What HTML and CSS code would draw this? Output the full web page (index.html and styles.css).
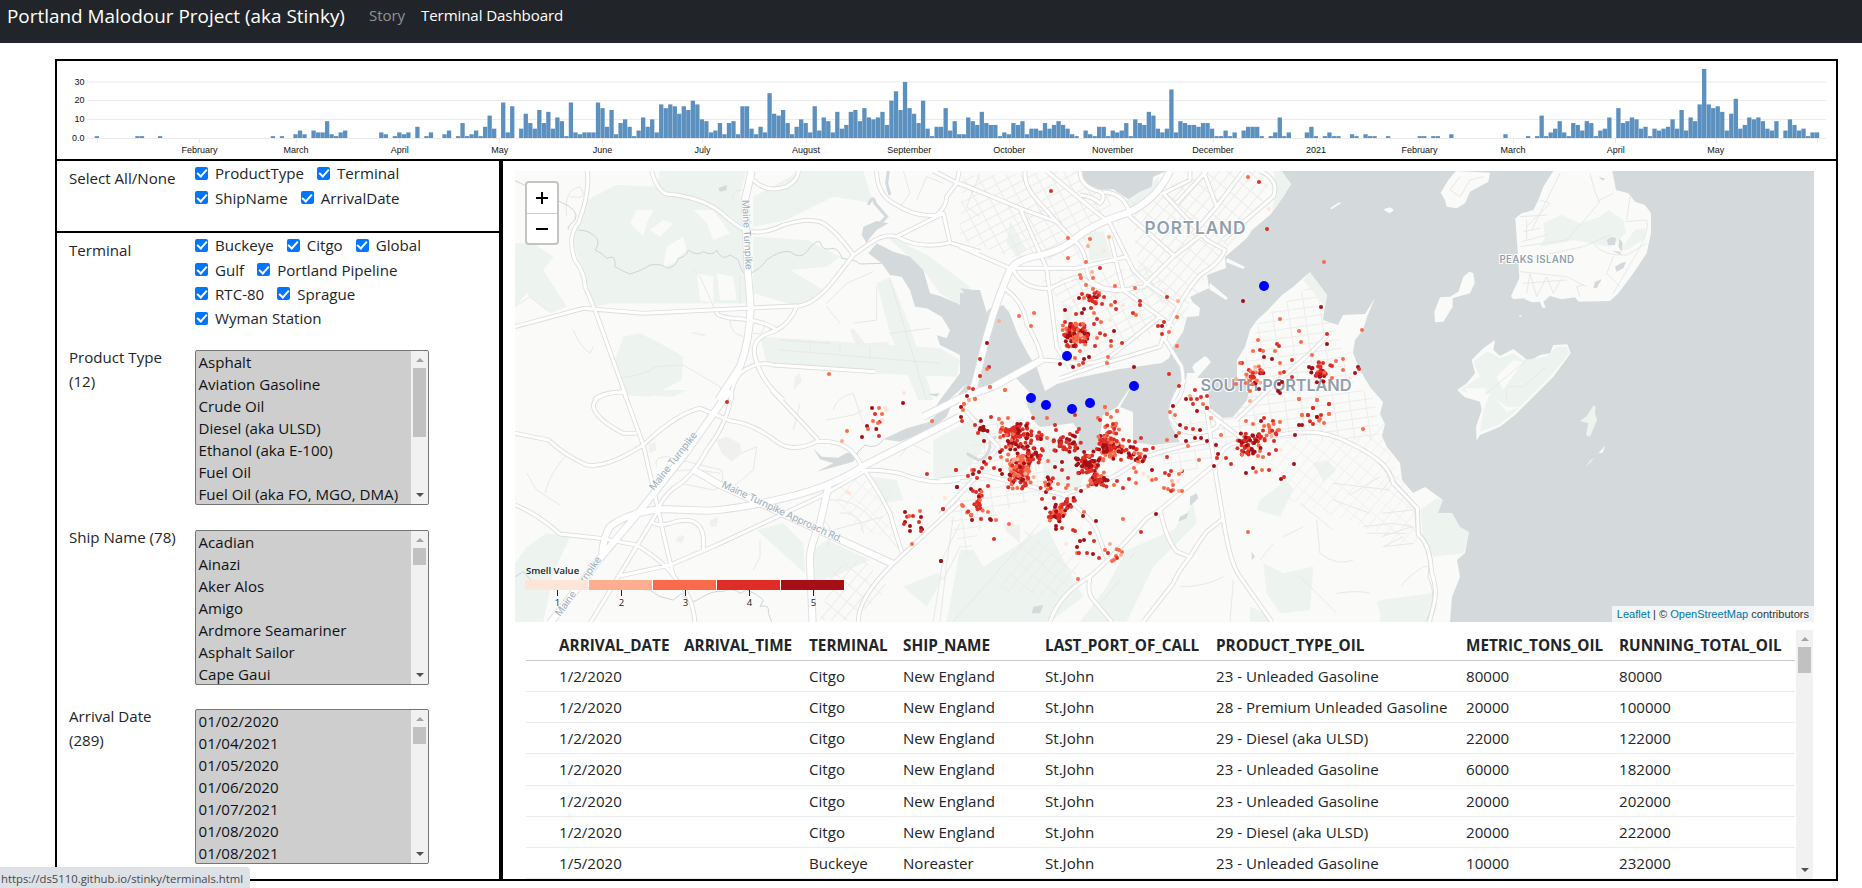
FILE: index.html
```html
<!DOCTYPE html>
<html lang="en">
<head>
<meta charset="utf-8">
<title>Portland Malodour Project</title>
<link rel="stylesheet" href="styles.css">
</head>
<body>
<header class="navbar">
  <span class="brand">Portland Malodour Project (aka Stinky)</span>
  <nav class="nav"><a class="nav-link">Story</a><a class="nav-link active">Terminal Dashboard</a></nav>
</header>
<main class="dashboard">
  <section class="timeline">
    <svg id="histogram" class="histogram" viewBox="57 61 1779 98"></svg>
  </section>
  <div class="columns">
    <aside class="filters">
      <section class="filter-row select-all">
        <div class="filter-label inset">Select All/None</div>
        <div class="checks">
          <label class="check"><i class="box"></i>ProductType</label><label class="check"><i class="box"></i>Terminal</label>
          <label class="check"><i class="box"></i>ShipName</label><label class="check"><i class="box"></i>ArrivalDate</label>
        </div>
      </section>
      <section class="filter-row terminal">
        <div class="filter-label inset">Terminal</div>
        <div class="checks">
          <label class="check"><i class="box"></i>Buckeye</label><label class="check"><i class="box"></i>Citgo</label><label class="check"><i class="box"></i>Global</label>
          <label class="check"><i class="box"></i>Gulf</label><label class="check"><i class="box"></i>Portland Pipeline</label>
          <label class="check"><i class="box"></i>RTC-80</label><label class="check"><i class="box"></i>Sprague</label>
          <label class="check"><i class="box"></i>Wyman Station</label>
        </div>
      </section>
      <section class="filter-row product">
        <div class="filter-label">Product Type (12)</div>
        <div class="listbox">
          <ul class="options"><li>Asphalt</li><li>Aviation Gasoline</li><li>Crude Oil</li><li>Diesel (aka ULSD)</li><li>Ethanol (aka E-100)</li><li>Fuel Oil</li><li>Fuel Oil (aka FO, MGO, DMA)</li></ul>
          <div class="scrollbar"><b class="up"></b><b class="thumb long"></b><b class="down"></b></div>
        </div>
      </section>
      <section class="filter-row ship">
        <div class="filter-label">Ship Name (78)</div>
        <div class="listbox">
          <ul class="options"><li>Acadian</li><li>Ainazi</li><li>Aker Alos</li><li>Amigo</li><li>Ardmore Seamariner</li><li>Asphalt Sailor</li><li>Cape Gaui</li></ul>
          <div class="scrollbar"><b class="up"></b><b class="thumb"></b><b class="down"></b></div>
        </div>
      </section>
      <section class="filter-row arrival">
        <div class="filter-label">Arrival Date (289)</div>
        <div class="listbox">
          <ul class="options"><li>01/02/2020</li><li>01/04/2021</li><li>01/05/2020</li><li>01/06/2020</li><li>01/07/2021</li><li>01/08/2020</li><li>01/08/2021</li></ul>
          <div class="scrollbar"><b class="up"></b><b class="thumb"></b><b class="down"></b></div>
        </div>
      </section>
    </aside>
    <section class="content">
      <div class="map">
        <svg class="map-canvas" viewBox="515 171 1299 451">
          <defs>
            <pattern id="gridA" width="13" height="9" patternUnits="userSpaceOnUse" patternTransform="rotate(-28)"><path class="street" d="M0 .5H13M.5 0V9"/></pattern>
            <pattern id="gridB" width="9" height="14" patternUnits="userSpaceOnUse" patternTransform="rotate(40)"><path class="street" d="M0 .5H9M.5 0V14"/></pattern>
            <pattern id="gridC" width="16" height="9" patternUnits="userSpaceOnUse" patternTransform="rotate(-8)"><path class="street" d="M0 .5H16M.5 0V9"/></pattern>
            <g id="motorways">
              <path transform="translate(500 160) scale(.33333)" d="M755,33L735,120L743,330L752,440Q750,540 720,620L655,720"/>
              <path transform="translate(500 390) scale(.33333)" d="M690,0L560,185L410,375L300,505L150,700M1380,80L1090,228Q1000,290 850,325Q700,360 620,362L480,357Q380,370 330,410Q310,440 307,490M985,290L960,400Q925,480 930,520L938,700"/>
              <path transform="translate(960 160) scale(.33333)" d="M630,33Q590,120 500,160Q400,190 340,240Q300,275 220,290Q170,300 150,330Q110,420 80,530L45,670Q30,710 0,740M245,600L100,680L0,715L-110,770"/>
              <path transform="translate(500 390) scale(.33333)" d="M580,240Q620,260 650,280L1180,522"/>
            </g>
            <g id="majors">
              <path transform="translate(500 160) scale(.33333)" d="M455,33Q470,90 500,102Q600,110 660,155Q710,200 740,212Q790,225 850,195Q930,170 970,190Q1010,215 1060,285M262,33Q270,100 235,190Q200,230 225,300Q255,340 255,380L285,450L375,700L380,720M45,500L250,445L430,460L900,437Q950,430 1010,350L1060,285L1110,250Q1150,220 1190,230Q1260,270 1350,248L1440,275M650,455Q650,470 700,475Q790,480 830,510Q870,490 890,440M830,512Q750,530 765,590Q780,660 850,720M1130,33Q1130,100 1180,130Q1250,175 1310,165Q1340,140 1340,110L1370,70L1378,33M1300,33L1370,68L1440,95M1190,230L1330,160L1350,248M1125,635L820,615Q770,600 720,640Q690,680 695,720M760,60Q800,100 860,80Q895,60 895,33M370,695Q290,700 285,720"/>
              <path transform="translate(500 390) scale(.33333)" d="M45,130L145,150Q200,200 260,225Q320,235 430,165Q530,70 600,55Q650,75 690,92Q760,100 830,155Q880,190 950,155Q1050,145 1085,230Q1130,290 1170,370Q1190,440 1205,485M370,0L430,165L475,360M370,5Q280,10 280,50Q290,90 370,130L410,130M695,0Q690,90 620,180Q580,260 520,295Q480,330 470,370L355,560L270,700M815,0L955,150M1100,240L960,320L650,465L510,525L350,560M1085,240Q1150,240 1200,250Q1300,290 1380,268M1380,335L1175,525Q1070,630 1075,700M45,345Q110,370 180,432L300,445L410,465Q500,520 530,570Q580,620 585,700M475,360L490,430L520,560M455,395Q470,410 510,400Q600,370 610,440L610,480"/>
              <path transform="translate(960 160) scale(.33333)" d="M0,70L180,145L290,185L340,240Q375,265 380,320Q380,390 490,390L550,380Q600,330 640,290L730,220M260,33L400,150L450,190L520,330L560,370L660,440M195,33Q190,80 240,130L290,185M360,33Q360,80 420,95Q440,110 420,130Q400,110 360,105M430,95Q500,100 510,170L640,285M0,260L150,325L350,325L500,290M610,100L740,240L795,270Q780,310 720,345Q680,390 650,450Q620,500 615,540L665,620Q680,700 640,735M450,230L490,390L600,470L640,500M180,145L260,325L290,560L330,625M125,380Q190,420 200,490Q240,560 245,600L320,605Q400,620 450,590L600,470M300,655L400,620L600,560L620,500M160,330Q190,390 270,385Q340,350 360,350Q420,400 490,390M730,33L770,140L700,220M610,100L690,60L690,33M850,33L770,140M900,33Q960,60 940,110L870,170L790,240M650,130L740,33"/>
              <path transform="translate(960 160) scale(.33333)" d="M1105,520Q1080,560 950,665L830,780"/>
              <path transform="translate(940 380) scale(.33333)" d="M0,300L130,285Q320,330 370,345L520,290L620,230Q720,195 830,180M370,345Q450,410 470,450L500,535M0,405L100,300L175,200L75,90M330,725Q360,640 450,590Q520,530 620,415L660,390L840,240Q840,195 900,185L1050,160Q1150,145 1230,190Q1340,240 1355,300Q1400,350 1430,385L1435,460Q1480,510 1470,590Q1500,650 1465,725M800,90L830,300L850,420Q870,550 900,590L995,725M660,390Q680,480 710,515L750,530Q780,480 800,455L850,415M750,530Q710,580 700,610L610,725M450,590Q440,640 460,660L515,725M735,0Q690,60 690,110Q710,160 770,160Q850,150 830,120L800,95L905,175"/>
            </g>
          </defs>
          <rect class="land" x="515" y="171" width="1299" height="451"/>
          <g class="green">
            <path transform="translate(500 160) scale(.33333)" d="M480,33L740,33L720,100L735,200L745,430L330,430L290,440L250,380L235,300L215,230L235,180L260,120L350,75L470,80ZM45,250L100,250L160,290L130,330L200,440L150,460L80,400L45,440ZM760,110L800,90L900,33L1090,33L1120,130L1000,110L860,180L760,200ZM345,600L370,530L420,520L500,560L550,590L545,660L450,710L375,705ZM780,530L1320,565L1380,600L1370,650L1100,640L800,610ZM1130,370L1170,350L1230,500L1300,720L1255,720L1170,520ZM760,230L920,240L1020,290L980,320L870,330L970,390L900,440L760,400ZM1150,220L1290,290L1410,380L1400,450L1320,400L1270,330Z"/>
            <path transform="translate(500 390) scale(.33333)" d="M1300,150L1380,110L1380,250L1300,280ZM770,420L850,400L910,460L915,550ZM940,480L980,450L1110,510L1000,560L940,575ZM45,520L80,470L140,430L210,440L160,550L130,695L45,695ZM1310,550L1210,590L1280,650L1330,560ZM1370,550L1340,695L1380,695ZM1110,260L1190,270L1210,330L1150,340ZM385,0L560,0L520,20L400,15Z"/>
            <path transform="translate(940 380) scale(.33333)" d="M0,170L110,110L150,180L80,270L0,290ZM60,510L100,510L130,560L320,440L360,520L430,650L330,725L20,725ZM560,510L700,450L760,370L770,430L640,560L560,725L420,725L500,620ZM960,360L1040,300L1060,330L1020,410L950,390ZM970,550L1030,580L1120,560L1110,690L1020,700L980,640ZM1310,665L1475,640L1480,725L1320,700ZM310,170L400,170L440,230L420,330L310,300ZM1120,250L1160,240L1190,270L1150,305ZM930,680L980,700L995,725L930,725Z"/>
            <path transform="translate(1380 160) scale(.33333)" d="M120,1050L170,1015L190,1020L175,1060L215,1060L240,1100L268,1115L250,1180L160,1190L130,1130ZM0,1320L155,1300L150,1386L0,1386Z"/>
            <path transform="translate(960 160) scale(.33333)" d="M940,33L970,33L990,70L975,110L935,150L950,90ZM1030,360L1050,335L1100,405L1095,440ZM380,215L430,215L455,290L390,300ZM150,180L200,270L170,290L140,250ZM310,430L340,440L330,490L310,490ZM500,120L545,90L600,50L580,110L510,150Z"/>
          </g>
          <g class="clearing">
            <path transform="translate(500 160) scale(.33333)" d="M390,190L410,150L460,150L440,190L430,230ZM490,320L500,260L550,230L560,270L520,310ZM580,150L640,150L690,220L640,240L620,190ZM590,340L640,350L640,430L600,420ZM450,210L490,180L520,190L480,230ZM650,340L700,350L710,420L660,420Z"/>
          </g>
          <g>
            <path fill="url(#gridA)" d="M962 176L1080 171L1120 190L1080 260L1020 260L960 240Z M1040 280L1160 265L1165 330L1075 365L1060 300Z"/>
            <path fill="url(#gridB)" d="M1130 200L1210 171L1270 171L1265 205L1215 260L1180 330L1140 280Z M1000 590L1025 530L1080 560L1070 600Z M832 570L860 555L890 590L850 620L820 620Z"/>
            <path fill="url(#gridC)" d="M1240 375L1260 320L1310 285L1335 325L1350 380L1375 400L1380 440L1240 440L1180 480L1150 450Z M980 420L1030 420L1080 470L1030 500L985 520L965 560L950 520Z"/>
            <path fill="url(#gridB)" opacity=".6" d="M1240 440L1380 440L1420 510L1400 540L1290 500Z M840 470L890 490L900 540L860 530L835 500Z M1385 420L1395 480L1420 540L1400 550L1340 500L1335 450Z"/>
          </g>
          <g class="minor">
            <path transform="translate(500 160) scale(.33333)" d="M200,170Q190,90 240,80Q270,120 210,110M45,440L90,410L140,450M220,510Q240,560 270,580L280,560M350,655Q420,650 470,620L550,615L660,680L680,720M650,460L600,350L580,330M720,350L720,430M1130,380L1130,480L1060,490M980,440L1020,490M1120,335L1040,370L980,430M1440,40L1400,140L1440,170M1210,33L1230,100L1200,140M1250,120L1280,50L1330,70M840,540L990,550M840,570L1320,610M1170,360L1280,720M1170,520L1290,505M930,540V570M1020,550V580M1110,560V590M700,120Q690,90 730,90M690,480Q690,520 730,530M790,480Q800,530 760,520"/>
            <path transform="translate(500 390) scale(.33333)" d="M80,250L110,300L180,345M195,200Q150,250 135,310M470,230Q460,200 500,200L665,240Q680,290 640,300L540,280M480,250Q560,230 660,250M700,200L770,170L760,240L700,290M900,40L880,120M1000,60Q1010,20 1060,10L1090,100M980,90L1060,75L1090,60M990,330Q1060,320 1130,400L1190,470M1020,370Q1080,360 1090,430M1000,420L1150,380M780,450L780,500L760,540M970,390Q1010,420 980,470M1380,400L1330,500L1300,695M1360,380L1340,520L1320,695M1200,200L1230,160L1290,190"/>
            <path transform="translate(940 380) scale(.33333)" d="M720,620Q800,620 850,590M1000,490L960,540M1130,420L1140,520Q1190,560 1240,540M1080,590L1190,700M1190,640Q1260,630 1290,640M880,600L870,725M1270,440L1360,430L1420,440M1330,500L1420,490M1280,460L1400,460M1030,470L1090,440M1080,370L1180,450M1180,360L1290,400M1230,345L1320,290M1180,310L1350,330M540,600L480,670M40,725L300,430M10,600L60,500"/>
          </g>
          <g class="buildings">
            <path transform="translate(500 390) scale(.33333)" d="M650,150L680,140L720,160L725,190L695,215L665,190ZM445,165L465,155L470,180L450,190ZM630,390L655,380L650,410L630,410ZM540,435L555,440L545,460L525,450Z"/>
            <path transform="translate(500 160) scale(.33333)" d="M1050,510L1060,505L1095,550L1165,545L1165,560L1070,560ZM885,650L900,640L905,665L880,690ZM575,515L615,522L615,530L575,520Z"/>
            <path transform="translate(940 380) scale(.33333)" d="M190,430L240,435L240,490L200,455Z"/>
          </g>
          <g class="water">
            <path d="M1282 171L1291 184L1284 196L1270 215L1252 230L1247 238L1225 257L1226 268L1207 275L1209 288L1190 297L1198 312L1187 317L1183 332L1173 347L1169 358L1162 363L1120 369L1077 378L1057 384L1045 391L1037 368L1028 354L1018 335L1009 312L1003 305L988 310L984 321L977 323L973 305L960 295L960 362L975 376L970 385L990 390L1015 377L1030 393L1027 405L1035 422L1040 427L1060 425L1073 423L1080 433L1077 445L1082 453L1097 448L1100 437L1103 415L1117 407L1127 392L1133 384L1120 407L1133 412L1133 442L1153 445L1180 442L1170 423L1168 410L1185 387L1187 373L1195 373L1192 367L1207 357L1211 362L1197 378L1210 378L1208 390L1210 408L1223 418L1233 417L1247 400L1250 387L1237 380L1237 360L1245 347L1250 330L1257 320L1268 310L1282 295L1293 287L1310 272L1327 295L1323 320L1338 325L1343 315L1365 314L1375 298L1367 317L1363 330L1355 340L1353 353L1360 370L1370 387L1383 402L1380 414L1385 424L1382 436L1387 447L1400 463L1402 480L1413 493L1425 487L1443 500L1438 513L1452 513L1460 527L1469 532L1465 553L1457 560L1460 577L1452 597L1450 622H1814V171Z"/>
            <path transform="translate(960 160) scale(.33333)" d="M357,33L370,65L420,90L460,88L505,118L540,95L575,80L580,50L620,33Z"/>
            <path transform="translate(500 160) scale(.33333)" d="M1100,250L1085,225L1090,200L1130,183L1165,190L1130,210L1105,240ZM1105,280L1145,310L1170,345L1205,350L1230,390L1245,440L1280,445L1325,470L1350,510L1340,535L1310,525L1320,555L1370,580L1420,610L1415,655L1365,715L1385,715L1435,655L1500,590L1440,390L1425,390L1380,385L1415,420L1410,450L1370,430L1320,408L1290,400L1270,330L1230,290L1180,275L1130,250ZM655,85L680,75V90L660,95Z"/>
            <path transform="translate(960 160) scale(.33333)" d="M0,400L25,395L50,440L50,475L75,480L90,445L135,440L110,500L60,640L10,680L-90,770L-60,720L0,640Z"/>
            <path transform="translate(500 390) scale(.33333)" d="M1365,20L1330,50L1290,95L1220,115L1150,148L1200,155L1290,120L1340,80ZM1075,190L1040,188L1015,203L965,200L940,175L960,208L1000,220L950,245L1060,215ZM1285,12L1320,10L1310,20Z"/>
            <path transform="translate(940 380) scale(.33333)" d="M750,350L770,340L775,355L750,378ZM720,410L745,398L740,415L715,425ZM280,680L310,675L300,700L275,700ZM565,540L585,515L575,530ZM935,515L945,530L935,540Z"/>
          </g>
          <g class="stream">
            <path transform="translate(500 160) scale(.33333)" d="M45,62L180,125Q240,150 225,180Q200,200 205,210M235,210Q270,210 290,235Q300,250 285,270Q310,280 320,295Q350,280 345,320Q370,335 390,342Q430,330 450,315Q490,310 500,325Q530,320 535,295Q560,290 565,270Q590,290 610,275Q640,290 650,270Q665,305 690,285Q700,290 715,300Q725,340 740,345Q780,330 800,300Q840,270 870,275Q900,300 920,275Q945,240 960,245Q965,275 1000,265Q1020,270 1025,295Q1070,300 1080,312L1145,310"/>
            <path transform="translate(500 390) scale(.33333)" d="M45,560L70,545L110,590L170,580L240,600L280,590L450,600L480,620L520,630L545,610Q570,650 600,625Q640,600 665,605Q700,590 720,610L740,600Q770,610 790,630L780,650Q810,640 805,670L815,695M1150,148Q1130,180 1095,165L1070,190"/>
          </g>
          <g class="wide-stream">
            <path transform="translate(500 160) scale(.33333)" d="M1165,33L1160,70L1170,105M1105,135Q1120,100 1125,130L1160,170L1140,190"/>
            <path transform="translate(940 380) scale(.33333)" d="M170,170Q145,180 150,200Q140,240 115,240L80,220"/>
          </g>
          <g class="land">
            <path transform="translate(1380 160) scale(.33333)" d="M520,33L697,33L708,90L745,100L765,125L795,135L813,160L813,220L800,280L760,340L715,400L690,423L596,425L585,412L545,418L510,408L490,425L497,443L487,443L480,425L455,427L430,415L400,418L393,408L418,355L415,300L406,175L425,160L460,150L475,120L490,80ZM228,33L330,38L325,65L270,95L255,130L230,145L200,140L195,120L182,98L205,60ZM345,540L340,570L360,588L400,567L430,590L445,605L480,585L510,580L520,555L562,553L572,580L520,650L405,765L360,800L300,825L290,842L288,800L305,750L300,725L255,712L232,690L260,670L285,640L275,600L310,565ZM268,335L280,340L284,370L270,400L240,408L218,415L218,440L190,485L165,487L163,455L180,412L210,410L235,395L250,350ZM676,856L668,878L655,880ZM643,893L617,920L630,902ZM10,148L30,142L42,150L30,160L20,155ZM-150,145L-125,128L-115,128L-145,148ZM416,465L425,465L422,471Z"/>
            <path d="M1193 365L1205 356L1210 362L1200 370Z M1227 258L1245 267L1243 269L1226 262Z M1210 283L1228 298L1226 300L1209 289Z M1190 300L1200 308L1199 316L1187 317Z"/>
          </g>
          <g class="green">
            <path transform="translate(1380 160) scale(.33333)" d="M490,190L545,165L600,190L660,170L685,150L730,180L738,220L690,260L580,240L540,250L480,260L495,230ZM720,270L765,210L795,205L795,235L740,270ZM335,580L360,595L400,580L430,600L500,590L530,560L560,560L568,580L515,645L400,760L355,795L300,815L310,750L330,700L290,710L240,690L300,650L280,605L320,575ZM640,737L647,738L645,760L651,780L630,830L618,825L625,790L600,783L620,768Z"/>
          </g>
          <g class="clearing"><path transform="translate(1380 160) scale(.33333)" d="M350,650L400,600L430,605L370,690ZM255,685L320,685L310,710L270,712ZM340,710L380,740L420,740L380,755Z"/></g>
          <g class="water"><path transform="translate(1380 160) scale(.33333)" d="M680,240L695,230L708,235L705,255L685,255ZM718,235L728,250L725,275L715,260ZM705,320L725,308L738,306L730,325L710,335ZM645,365L665,358L650,385L640,383ZM655,52L675,55L670,62ZM695,272L720,275L725,285Z"/></g>
          <g class="minor">
            <path transform="translate(1380 160) scale(.33333)" d="M540,40L455,210M630,40Q650,120 660,125L605,190L560,240L420,260M700,100L650,125M480,120L510,130L440,200M420,170L500,165M440,180V240M430,215L480,205M425,245L500,225M420,300L610,260L690,225M735,185L800,180Q810,210 770,280L700,400M640,250Q670,290 740,285L800,250M700,290L680,340L720,380M420,335L560,350L620,380M430,370L560,360M440,400L450,340L470,410L500,350L520,400L545,355M600,410L590,380L610,375M750,110L740,180M240,50L210,90L240,110L270,60L310,50M320,700L440,600M380,720L380,680L430,680L500,620M30,960L0,1000M5,1060L100,1050M5,1130L80,1105L100,1100M10,1160L70,1130M65,1280Q70,1260 130,1220L145,1220"/>
          </g>
          <g class="roads">
            <use href="#majors" class="casing"/><use href="#motorways" class="casing wide"/>
            <use href="#majors" class="fill"/><use href="#motorways" class="fill wide"/>
            <g class="casing"><path id="coastal" transform="translate(1380 160) scale(.33333)" d="M0,905Q30,930 40,970L112,1045L115,1125Q150,1150 155,1240Q175,1290 160,1340L148,1386"/></g>
            <use href="#coastal" class="fill"/>
          </g>
          <g class="place">
            <text x="1144.5" y="233.5" font-size="17.2" textLength="101">PORTLAND</text>
            <text x="1200.5" y="391" font-size="16.4" textLength="151">SOUTH PORTLAND</text>
            <text x="1499.5" y="263" font-size="9.8" textLength="74.5">PEAKS ISLAND</text>
          </g>
          <g class="road-name">
            <text transform="translate(742 200) rotate(87)" textLength="70">Maine Turnpike</text>
            <text transform="translate(654 491) rotate(-52)" textLength="71">Maine Turnpike</text>
            <text transform="translate(560 617) rotate(-54)" textLength="71">Maine Turnpike</text>
            <text transform="translate(721 487) rotate(25)" textLength="132">Maine Turnpike Approach Rd.</text>
          </g>
          <g id="reports"></g>
          <g id="terminals" class="terminals"></g>
          <g class="legend">
            <text class="legend-title" x="526" y="574">Smell Value</text>
            <rect class="level1" x="525" y="580" width="63" height="10"/><rect class="level2" x="589" y="580" width="63" height="10"/><rect class="level3" x="653" y="580" width="63" height="10"/><rect class="level4" x="717" y="580" width="63" height="10"/><rect class="level5" x="781" y="580" width="63" height="10"/>
            <path class="legend-tick" d="M557.5 590v6M621.5 590v6M685.5 590v6M749.5 590v6M813.5 590v6"/>
            <text x="557.5" y="606">1</text><text x="621.5" y="606">2</text><text x="685.5" y="606">3</text><text x="749.5" y="606">4</text><text x="813.5" y="606">5</text>
          </g>
        </svg>
        <div class="zoom">
          <span class="zoom-btn"><svg viewBox="0 0 12 12"><path d="M0 6H12M6 0V12"/></svg></span>
          <span class="zoom-btn"><svg viewBox="0 0 12 12"><path d="M0 6H12"/></svg></span>
        </div>
        <div class="attribution"><a>Leaflet</a> | © <a>OpenStreetMap</a> contributors</div>
      </div>
      <div class="table-wrap">
        <table class="shipments">
          <colgroup><col class="c-pick"><col class="c-date"><col class="c-time"><col class="c-term"><col class="c-ship"><col class="c-port"><col class="c-prod"><col class="c-tons"><col class="c-total"></colgroup>
          <thead><tr><th></th><th>ARRIVAL_DATE</th><th>ARRIVAL_TIME</th><th>TERMINAL</th><th>SHIP_NAME</th><th>LAST_PORT_OF_CALL</th><th>PRODUCT_TYPE_OIL</th><th>METRIC_TONS_OIL</th><th>RUNNING_TOTAL_OIL</th></tr></thead>
          <tbody>
            <tr><td></td><td>1/2/2020</td><td></td><td>Citgo</td><td>New England</td><td>St.John</td><td>23 - Unleaded Gasoline</td><td>80000</td><td>80000</td></tr>
            <tr><td></td><td>1/2/2020</td><td></td><td>Citgo</td><td>New England</td><td>St.John</td><td>28 - Premium Unleaded Gasoline</td><td>20000</td><td>100000</td></tr>
            <tr><td></td><td>1/2/2020</td><td></td><td>Citgo</td><td>New England</td><td>St.John</td><td>29 - Diesel (aka ULSD)</td><td>22000</td><td>122000</td></tr>
            <tr><td></td><td>1/2/2020</td><td></td><td>Citgo</td><td>New England</td><td>St.John</td><td>23 - Unleaded Gasoline</td><td>60000</td><td>182000</td></tr>
            <tr><td></td><td>1/2/2020</td><td></td><td>Citgo</td><td>New England</td><td>St.John</td><td>23 - Unleaded Gasoline</td><td>20000</td><td>202000</td></tr>
            <tr><td></td><td>1/2/2020</td><td></td><td>Citgo</td><td>New England</td><td>St.John</td><td>29 - Diesel (aka ULSD)</td><td>20000</td><td>222000</td></tr>
            <tr><td></td><td>1/5/2020</td><td></td><td>Buckeye</td><td>Noreaster</td><td>St.John</td><td>23 - Unleaded Gasoline</td><td>10000</td><td>232000</td></tr>
          </tbody>
        </table>
        <div class="scrollbar tall"><b class="up"></b><b class="thumb"></b><b class="down"></b></div>
      </div>
    </section>
  </div>
</main>
<div class="status">https://ds5110.github.io/stinky/terminals.html</div>
<script src="script.js"></script>
</body>
</html>
```
FILE: styles.css
```css
* { box-sizing: border-box; }
body { margin: 0; height: 888px; overflow: hidden; background: #fff; color: #212529; font-family: "Open Sans", "Noto Sans", sans-serif; font-size: 15.1px; line-height: 24px; }

.navbar { display: flex; height: 43px; padding-left: 7px; background: #212529; }
.brand { width: 362px; font-size: 18.9px; line-height: 32px; color: #fff; white-space: nowrap; letter-spacing: .01px; }
.nav { display: flex; gap: 16px; line-height: 31px; letter-spacing: -.1px; }
.nav-link { color: #909294; }
.nav-link.active { color: #fff; }

.dashboard { display: flex; flex-direction: column; width: 1783px; height: 822px; margin: 16px 0 0 55px; border: 2px solid #000; }
.timeline { flex: none; height: 100px; border-bottom: 2px solid #000; }
.histogram { display: block; width: 1779px; height: 98px; }
.grid { stroke: #ebebeb; }
.grid.soft { stroke: #f4f4f4; }
.bars rect { fill: #5b90bf; }
.axis { font: 9px "Liberation Sans", Arial, sans-serif; fill: #111; }
.axis .month { text-anchor: middle; }
.axis .count { text-anchor: end; }

.columns { display: flex; flex: 1; min-height: 0; }
.filters { flex: none; width: 446px; border-right: 4px solid #000; }
.filter-row { display: grid; grid-template-columns: 126px 1fr; align-items: start; padding-left: 12px; }
.filter-label { width: 116px; margin-top: -1px; }
.filter-label.inset { padding-top: 6px; }
.select-all { height: 72px; border-bottom: 2px solid #000; }
.terminal { height: 113px; }
.product { height: 180px; }
.ship { height: 179px; }
.checks { display: flex; flex-wrap: wrap; width: 250px; column-gap: 13px; }
.check { display: flex; align-items: center; height: 24.4px; gap: 7px; white-space: nowrap; }
.box { width: 13px; height: 13px; border-radius: 2px; background: #0075ff; display: flex; align-items: center; justify-content: center; }
.box::after { content: ""; width: 4px; height: 8px; margin-top: -2px; border: solid #fff; border-width: 0 2px 2px 0; transform: rotate(42deg); }

.listbox { display: flex; width: 234px; height: 155px; margin-top: 4px; border: 1px solid #767676; border-radius: 2px; overflow: hidden; background: #cecece; }
.options { flex: 1; margin: 0; padding: 0 0 0 2.5px; list-style: none; color: #101214; line-height: 22px; white-space: nowrap; overflow: hidden; }
.scrollbar { flex: none; display: flex; flex-direction: column; align-items: center; width: 17px; background: #f1f1f1; }
.scrollbar .up, .scrollbar .down { width: 0; height: 0; border: 4px solid transparent; }
.scrollbar .up { margin: 3px 0 6px; border-bottom-color: #a3a3a3; }
.scrollbar .down { margin: auto 0 3px; border-top-color: #505050; }
.scrollbar .thumb { width: 13px; height: 17px; background: #c1c1c1; }
.scrollbar .thumb.long { height: 69px; }

.content { flex: 1; min-width: 0; padding: 10px 22px 0 12px; }
.map { position: relative; width: 1299px; height: 451px; overflow: hidden; }
.map-canvas { display: block; width: 1299px; height: 451px; }
.land { fill: #fafaf8; }
.green { fill: #edf3ee; }
.clearing { fill: #fafaf8; }
.water { fill: #d4dadc; }
.buildings { fill: #f0f0ee; }
.street { fill: none; stroke: #ececeb; stroke-width: 1; }
.minor path { fill: none; stroke: #e8e8e8; stroke-width: 1; vector-effect: non-scaling-stroke; }
.stream path, .wide-stream path { fill: none; stroke: #ccd6da; stroke-width: 1; vector-effect: non-scaling-stroke; }
.wide-stream path { stroke-width: 3; stroke: #d4dadc; }
.roads path, #majors path, #motorways path { vector-effect: non-scaling-stroke; fill: none; stroke-linejoin: round; }
.casing { stroke: #dedede; stroke-width: 4.8px; }
.fill { stroke: #fff; stroke-width: 3px; }
.casing.wide { stroke-width: 8px; }
.fill.wide { stroke-width: 6.2px; }
.place { font-family: Inter, "Open Sans", sans-serif; font-weight: 600; fill: #919fad; stroke: #fff; stroke-width: 2px; paint-order: stroke; }
.road-name { font: 500 10px Inter, "Open Sans", sans-serif; fill: #a7b5c1; stroke: #fff; stroke-width: 1.5px; paint-order: stroke; }
.terminals { fill: #00f; }
.level1 { fill: #fee5d9; }
.level2 { fill: #fcae91; }
.level3 { fill: #fb6a4a; }
.level4 { fill: #de2d26; }
.level5 { fill: #a50f15; }
.legend text { font-size: 9.5px; text-anchor: middle; fill: #212529; }
.legend .legend-title { font-weight: 600; font-size: 9.5px; text-anchor: start; }
.legend-tick { stroke: #222; }
.zoom { position: absolute; left: 10px; top: 10px; width: 34px; border: 2px solid #c4c4c3; border-radius: 4px; background: #fff; }
.zoom-btn { display: flex; align-items: center; justify-content: center; height: 29px; }
.zoom-btn:first-child { height: 31px; border-bottom: 1px solid #ccc; }
.zoom-btn svg { width: 12px; height: 12px; stroke: #000; stroke-width: 2; }
.attribution { position: absolute; right: 0; bottom: 0; height: 16px; padding: 0 5px; background: #f2f4f5; font: 11.05px/16px "Liberation Sans", Arial, sans-serif; color: #333; white-space: nowrap; }
.attribution a { color: #0078a8; }

.table-wrap { display: flex; justify-content: space-between; height: 249px; margin: 8px 1px 0 11px; overflow: hidden; }
.shipments { width: 1269px; table-layout: fixed; border-collapse: separate; border-spacing: 0; white-space: nowrap; }
.shipments th, .shipments td { padding: 0; text-align: left; height: 31px; line-height: 24px; border-bottom: 1px solid #e9ebec; }
.shipments th { height: 31px; padding-bottom: 1px; font-weight: 700; font-size: 15.3px; border-bottom-color: #c9cacc; }
.c-pick { width: 33px; }
.c-date { width: 125px; }
.c-time { width: 125px; }
.c-term { width: 94px; }
.c-ship { width: 142px; }
.c-port { width: 171px; }
.c-prod { width: 250px; }
.c-tons { width: 153px; }
.tall .thumb { height: 26px; }
.status { position: absolute; left: 0; bottom: 0; width: 250px; height: 21px; padding-left: 1px; border-radius: 0 4px 0 0; background: #dee1e6; color: #45484c; font-size: 11.3px; line-height: 23px; white-space: nowrap; }
```
FILE: script.js
```js
const NS = 'http://www.w3.org/2000/svg';
function add(parent, tag, attrs, text) {
  const el = document.createElementNS(NS, tag);
  for (const k in attrs) el.setAttribute(k, attrs[k]);
  if (text) el.textContent = text;
  parent.appendChild(el);
  return el;
}

// Smell reports per time bin; [first bin, counts...]
const runs = [
  [0, 1], [9, 1, 1], [14, 1], [39, 1], [41, 1], [44, 2, 4, 2], [48, 4, 3, 3, 9, 2, 1, 3, 4], [63, 3, 2],
  [66, 1, 3, 2, 3], [71, 6], [73, 1, 3], [77, 2, 4], [80, 1, 8, 1, 2, 4, 1, 6, 12, 5],
  [90, 19, 3, 17, 0, 5, 13, 8, 5, 15, 8, 14, 5, 11, 9, 1, 19, 3, 2, 3, 3, 3, 19, 16, 6, 15, 2, 8, 10, 6, 1, 4, 11, 6, 10, 3,
    18, 16, 18, 17, 13, 17, 15, 20, 18, 10, 9, 3, 4, 8, 2, 8, 9, 2, 17, 17, 5, 2, 6, 3, 24, 13, 12, 15, 8, 2, 6, 10, 8, 3, 17,
    4, 11, 9, 3, 14, 5, 7, 14, 15, 9, 16, 11, 10, 11, 14, 7, 20, 25, 15, 30, 16, 13, 8, 20, 5, 1, 6, 6, 16, 4, 9, 2, 2, 11, 9,
    7, 14, 8, 7, 7, 1, 3, 2, 8, 7, 9, 2, 5, 5, 4, 8, 5, 7, 9, 7, 5, 2, 1, 0, 4, 2, 1, 6, 6, 1, 4, 3, 4, 8, 1, 10, 8, 7, 14, 12,
    5, 3, 5, 26, 3, 9, 8, 7, 7, 6, 8, 8, 5, 1, 1, 4, 1, 3, 0, 4, 6, 6, 6, 1, 0, 1, 3, 11, 1, 3],
  [268, 3, 6, 1, 0, 1, 3, 1, 1], [278, 2, 1, 0, 2, 1, 1], [286, 1], [293, 1, 1], [296, 1, 1], [300, 2], [312, 2], [317, 1],
  [319, 1, 12, 1, 3, 5, 9, 3, 1, 8, 7, 4, 9, 8, 1, 4, 5, 11, 0, 16, 8, 9, 11, 10, 5, 6, 1, 5, 4, 5, 6, 10, 5, 15, 4, 11, 9,
    18, 37, 18, 16, 17, 14, 4, 13, 21, 5, 7, 11, 10, 11, 9, 5, 4, 9, 0, 4, 10, 7, 4, 5, 1, 3, 3]
];
const chart = document.getElementById('histogram');
const months = [[97, ''], [199.3, 'February'], [295.8, 'March'], [399.4, 'April'], [499.4, 'May'], [602.2, 'June'], [702.2, 'July'],
  [805.8, 'August'], [908.9, 'September'], [1008.9, 'October'], [1112.5, 'November'], [1212.6, 'December'], [1315.7, '2021'],
  [1419.2, 'February'], [1512.8, 'March'], [1615.4, 'April'], [1715.5, 'May'], [1817.2, '']];
const axis = add(chart, 'g', { class: 'axis' });
[['30', 82, 2], ['20', 100.5, 1], ['10', 119.5, 1], ['0.0', 138.5, 1]].forEach(([t, y, w]) => {
  add(chart, 'path', { class: w === 2 ? 'grid soft' : 'grid', d: `M87 ${y}H1826`, 'stroke-width': w });
  add(axis, 'text', { class: 'count', x: 84.5, y: y + 2.8 }, t);
});
months.forEach(([x, t]) => {
  add(chart, 'path', { class: 'grid', d: `M${Math.round(x) + .5} 138v5` });
  if (t) add(axis, 'text', { class: 'month', x: x + .3, y: 153 }, t);
});
const bars = add(chart, 'g', { class: 'bars' });
runs.forEach(([first, ...counts]) => counts.forEach((n, k) => {
  if (n) add(bars, 'rect', { x: 94.7 + (first + k) * 4.515, y: 138 - n * 1.867, width: 4.3, height: n * 1.867 });
}));

// Smell reports: origin of each survey sheet (3x scale) and its x,y,level entries
const sheets = [
  [500, 160, '987,642,3'],
  [960, 160, '273,93,4 864,51,3 897,66,4 927,147,1 921,207,4 1092,306,3 849,423,5 1083,441,5 960,477,3 324,234,3 390,237,3 447,231,2 384,258,2 432,272,1 324,294,3 378,306,3 420,324,4 396,336,2 360,345,3 363,354,3 399,354,3 378,375,3 465,378,3 525,384,3 399,387,3 366,402,4 357,414,5 372,414,3 387,412,5 402,411,5 411,397,4 417,399,3 432,411,4 342,422,1 408,425,3 426,432,4 453,435,3 465,426,4 489,435,1 393,444,4 372,447,5 366,459,5 402,459,3 348,462,4 315,450,5 468,447,4 519,459,4 528,465,3 540,423,4 540,435,4 621,411,4 654,423,2 651,471,3 612,486,4 594,498,4 606,498,5 606,522,4 627,516,3 651,558,3 411,477,4 423,486,3 450,480,1 402,492,4 462,513,5 435,525,4 411,534,3 420,520,4 453,543,4 453,558,3 486,549,4 405,558,4 315,486,4 444,591,3 441,609,3 387,591,5 372,597,5 369,609,4 357,615,3 339,621,5 300,612,5 345,594,3 360,573,3 522,621,5 627,642,4 657,678,4 222,459,3 177,468,3 213,498,3 117,483,2 81,549,5 60,597,4 87,621,4 81,627,3 60,648,4 27,684,3 39,687,4 90,681,3 135,690,3 21,708,5 45,717,3 27,720,2 12,732,3 705,690,4 690,708,2 678,717,5 693,717,4 711,717,4 723,711,4 741,708,4 699,732,4 729,732,3 711,753,5 741,744,4 639,738,5 630,756,3 645,765,3 753,774,2 435,741,3 471,753,3 441,762,3 453,771,3 345,765,4 1017,513,3 1023,546,3 1101,522,4 1101,552,5 1206,510,3 894,540,3 951,552,4 957,558,4 945,573,3 879,573,3 900,570,4 909,573,3 912,591,5 936,597,5 960,609,3 996,600,4 1056,585,3 846,609,4 840,609,3 1128,603,3 1149,597,3 1149,630,3 1194,621,5 1197,627,4 1185,639,5 1170,654,1 1116,618,4 1116,654,3 1089,609,4 1047,621,5 972,636,4 960,639,3 996,651,4 828,657,2 828,672,3 870,693,3 897,687,5 870,723,2 966,666,5 957,672,5 954,693,5 960,699,5 1017,717,3 1071,720,3 1059,744,4 1107,732,4 1107,762,3 1026,765,3 1044,765,4 1071,771,5'],
  [500, 390, '681,36,4 1041,123,3 1026,153,2 1116,54,5 1137,54,3 1155,54,1 1161,60,1 1125,72,4 1146,72,3 1119,93,3 1140,95,4 1134,99,3 1147,90,1 1101,108,5 1104,117,3 1129,117,5 1086,141,5 1137,138,4 1209,39,5 1212,9,1 1296,93,3 1281,252,4 1368,240,4 1371,291,5 1335,324,1 1329,357,4 1041,306,1 1048,309,1 1215,366,5 1260,363,3 1221,380,4 1228,378,3 1239,378,4 1263,381,5 1215,396,5 1212,402,4 1257,396,4 1230,408,5 1263,414,5 1266,418,5 1263,423,4 1230,423,5 1236,462,3 1323,513,5'],
  [940, 380, '321,114,3 279,114,4 153,111,4 177,117,3 204,114,3 123,123,5 186,129,3 345,135,4 348,150,4 495,81,3 501,102,3 531,93,3 474,114,3 480,120,4 417,147,4 411,156,4 390,162,4 369,171,4 381,177,5 321,174,3 300,174,5 132,183,5 114,159,4 603,174,4 567,183,4 585,186,4 639,204,4 681,180,3 681,231,4 717,159,3 708,168,5 720,135,5 738,144,4 759,147,4 780,150,5 765,174,5 783,174,5 801,183,5 738,183,5 744,198,3 777,240,3 828,195,5 834,222,5 831,234,4 858,234,4 873,252,4 822,258,5 843,165,3 813,114,2 801,84,4 612,237,4 600,246,2 582,264,3 588,276,3 636,270,5 610,282,1 624,291,1 636,300,3 648,297,3 675,279,4 687,285,4 693,273,4 726,273,4 717,282,3 723,270,1 696,303,2 714,303,1 699,315,3 672,324,3 684,327,3 699,330,3 693,333,4 717,333,2 726,333,3 549,324,4 567,297,4 588,309,3 531,303,4 522,315,3 648,402,5 549,417,3 603,456,4 468,423,5 432,396,3 429,408,5 450,459,4 432,480,5 420,483,5 462,483,4 378,492,1 411,501,5 411,519,3 417,519,4 441,519,4 459,522,5 477,534,4 510,492,2 495,510,3 504,519,4 530,508,3 537,510,3 546,516,3 543,525,2 528,528,3 531,534,4 522,540,3 516,543,3 414,597,3 399,450,4 405,453,4 366,444,4 348,447,5 348,438,5 207,432,3 162,477,4 168,420,3 153,420,5 150,417,5 123,417,4 96,420,5 144,396,3 144,318,4 120,330,5 93,327,5 99,333,4 111,294,4 51,321,5 48,270,4 84,288,4 99,282,5 96,270,3 102,270,4 117,276,5 126,264,4 132,246,5 150,234,4 138,252,4 162,264,4 180,270,5 186,282,5 186,210,4 180,216,5 183,231,3 66,375,3 69,378,3 9,387,4 15,354,1 3,543,5 345,261,5 366,246,5 366,270,4 324,243,3 384,294,4 354,312,3 384,315,3 378,324,3 408,327,2 423,333,5 306,357,4 318,336,5 342,354,4 924,456,3 1062,252,5 1065,165,5 1269,147,3 1023,297,5 1032,291,4 918,279,5 939,264,5 948,276,3 966,270,3 987,270,4 954,228,3 969,231,3 987,222,4 1008,210,4 1023,210,1 960,213,3 918,123,3 963,123,5 972,114,4 939,132,3 1020,126,3 1017,150,3 1002,183,4 999,123,4 1077,135,5 1086,135,5 1086,105,3 1104,105,4 1119,84,4 1131,111,5 1143,105,4 1152,129,3 1140,117,3 1119,132,4 1110,124,4 1137,122,3 1167,102,3 1167,72,4 1131,60,3 1077,57,3 63,81,5 72,72,3 63,111,5 66,123,4 69,90,3 195,30,3 150,21,3 105,57,3 87,60,2']
];
const reports = document.getElementById('reports');
const dot = (x, y, level) => add(reports, 'circle', { class: 'level' + level, cx: x.toFixed(1), cy: y.toFixed(1), r: 2 });
sheets.forEach(([ox, oy, list]) => list.split(' ').forEach(s => {
  const [x, y, l] = s.split(',').map(Number);
  dot(ox + x / 3, oy + y / 3, l);
}));

// Dense neighbourhoods: x, y, spread x, spread y, count, levels drawn from
let seed = 20210;
const rnd = () => (seed = (seed * 16807) % 2147483647) / 2147483647;
const spread = () => (rnd() + rnd() - 1) * 1.65;
[
  [1075, 335, 9, 8, 120, '3333444552'], [1094, 297, 5, 5, 12, '33445'], [1255, 375, 7, 6, 26, '334452'], [1320, 373, 7, 8, 32, '34455'],
  [1015, 432, 12, 6, 60, '34445'], [983, 429, 5, 4, 10, '455'], [1017, 444, 10, 7, 32, '34455'], [1037, 437, 6, 5, 10, '445'],
  [1020, 470, 9, 12, 130, '3333444552'], [1035, 456, 6, 6, 22, '445'], [1047, 482, 6, 6, 14, '345'], [1110, 447, 9, 9, 95, '33444552'],
  [1110, 428, 6, 6, 15, '334'], [1088, 463, 9, 8, 75, '344555'], [1098, 480, 7, 5, 45, '33445'], [1135, 453, 8, 6, 24, '344455'],
  [1062, 445, 8, 5, 22, '445'], [1075, 443, 4, 7, 10, '455'], [1058, 513, 8, 6, 45, '34455'], [1068, 502, 5, 3, 12, '445'],
  [979, 501, 3, 7, 18, '3445'], [970, 513, 2, 2, 5, '34'], [1248, 445, 8, 8, 52, '344555'], [1270, 430, 5, 5, 14, '3342'], [1260, 438, 4, 3, 8, '45']
].forEach(([x, y, sx, sy, n, levels]) => {
  for (let i = 0; i < n; i++) dot(x + spread() * sx, y + spread() * sy, levels[Math.floor(rnd() * levels.length)]);
});

const terminals = document.getElementById('terminals');
[[1264, 286], [1067, 356], [1031, 398], [1046, 405], [1072, 409], [1090, 403], [1134, 386]]
  .forEach(([cx, cy]) => add(terminals, 'circle', { cx, cy, r: 5 }));
```
